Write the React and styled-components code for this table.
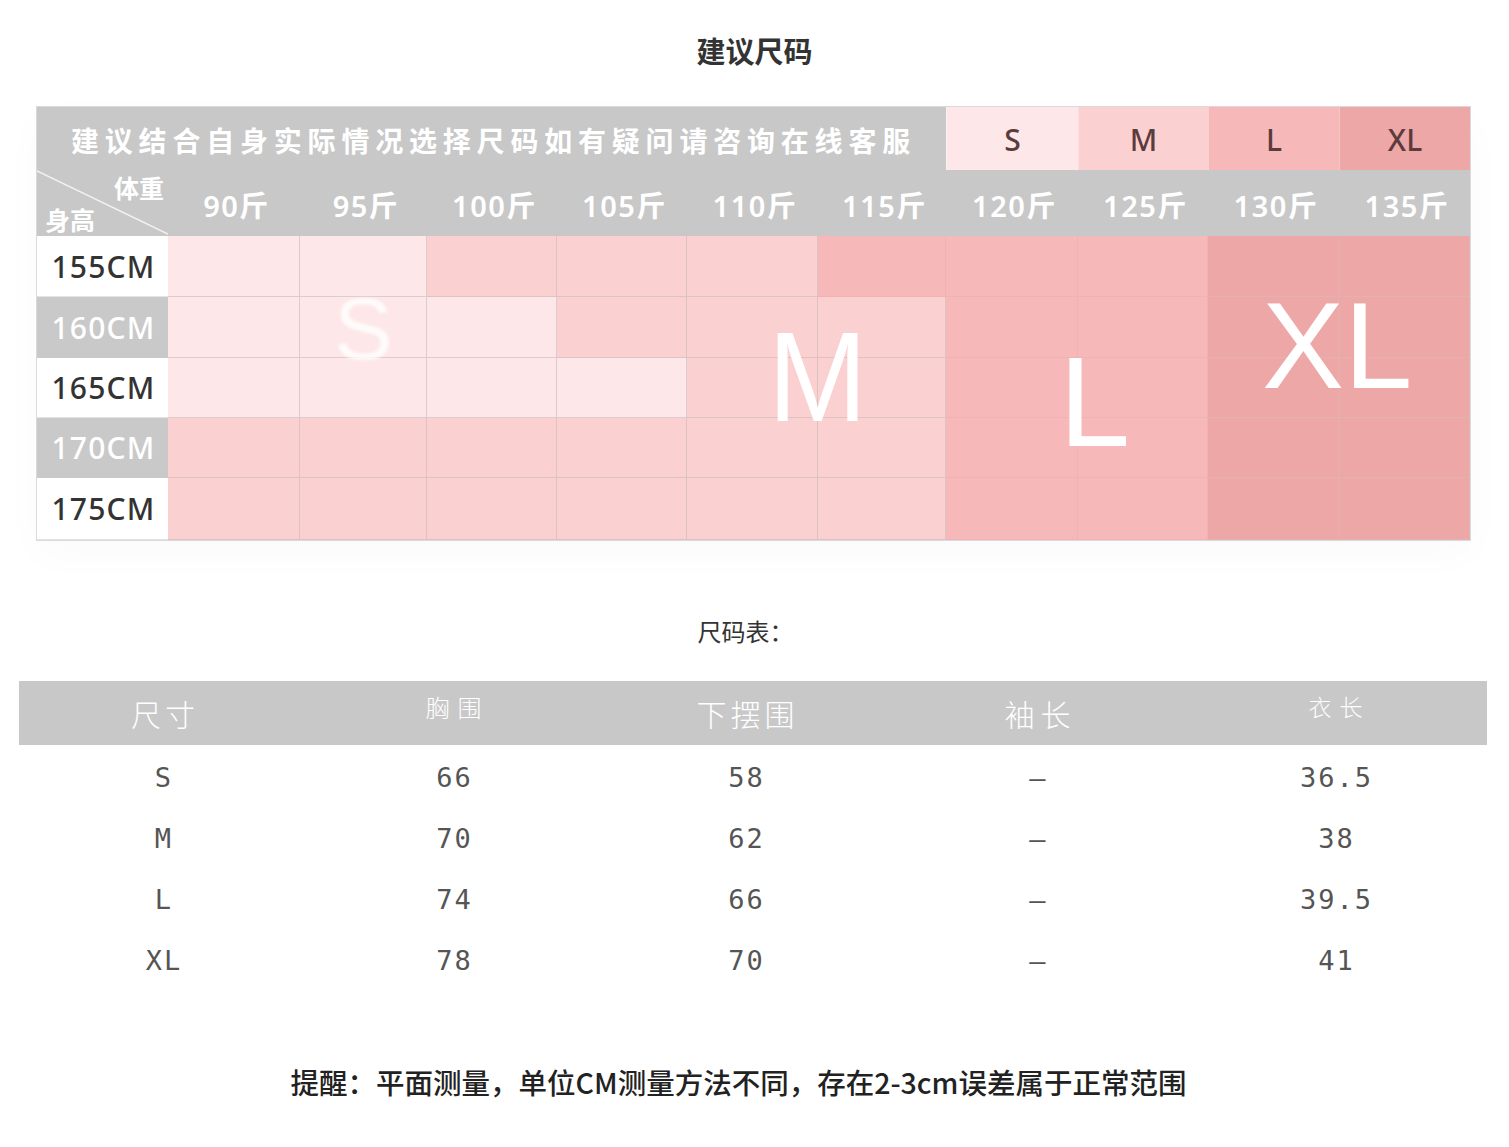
import React from "react";
import styled, { createGlobalStyle } from "styled-components";

const Global = createGlobalStyle`
  html, body { margin: 0; padding: 0; background: #ffffff; }
  body { font-family: "Noto Sans", "Noto Sans CJK SC", sans-serif; }
`;

const Page = styled.div`
  width: 1509px;
  min-height: 1147px;
  background: #fff;
  display: flex;
  flex-direction: column;
`;

const Title = styled.h1`
  margin: 33px 0 0 0;
  height: 74px;
  text-align: center;
  font-family: "Noto Sans CJK SC", sans-serif;
  font-size: 29px;
  line-height: 35px;
  font-weight: 700;
  color: #333;
  letter-spacing: 0px;
`;

const ChartWrap = styled.div`
  position: relative;
  margin-left: 37px;
  width: 1433px;
`;

const ChartGrid = styled.div`
  display: grid;
  grid-template-columns: 131px 132px 127px 130px 130px 131px 128px 132px 130px 131px 131px;
  grid-template-rows: 63px 66px 61px 61px 60px 60px 62px;
  width: 1433px;
  box-shadow: 0 0 0 1px #dadada, 0 14px 40px rgba(0, 0, 0, 0.025);
`;

const Notice = styled.div`
  grid-column: 1 / span 7;
  background: #c8c8c8;
  display: flex;
  align-items: center;
  justify-content: center;
  color: #fff;
  font-family: "Noto Sans CJK SC", sans-serif;
  font-weight: 700;
  font-size: 28px;
  letter-spacing: 5.8px;
  padding-top: 2px;
  padding-left: 4px;
  box-sizing: border-box;
`;

const SizeHead = styled.div`
  background: ${(p) => p.$bg};
  display: flex;
  align-items: center;
  justify-content: center;
  color: #5b3b3b;
  font-family: "Noto Sans", sans-serif;
  font-weight: 500;
  font-size: 30px;
  padding-top: 2px;
  box-sizing: border-box;
  border-left: 1px solid rgba(255, 255, 255, 0.35);
`;

const Corner = styled.div`
  position: relative;
  background: #c8c8c8;
  display: flex;
  flex-direction: column;
  justify-content: space-between;
  padding: 2px 4px 2px 8px;
  box-sizing: border-box;
  color: #fff;
  font-family: "Noto Sans CJK SC", sans-serif;
  font-weight: 700;
  font-size: 25px;
  line-height: 30px;
  overflow: hidden;
`;

const CornerTop = styled.span`
  align-self: flex-end;
`;

const CornerBottom = styled.span`
  align-self: flex-start;
`;

const Diagonal = styled.svg`
  position: absolute;
  left: 0;
  top: 0;
  width: 100%;
  height: 100%;
`;

const Weight = styled.div`
  background: #c8c8c8;
  display: flex;
  align-items: center;
  justify-content: center;
  color: #fff;
  font-family: "Noto Sans", "Noto Sans CJK SC", sans-serif;
  font-weight: 600;
  font-size: 29px;
  letter-spacing: 1.5px;
  padding-top: 2px;
  padding-left: 5px;
  box-sizing: border-box;
`;

const Height = styled.div`
  background: ${(p) => (p.$gray ? "#c9c9c9" : "#ffffff")};
  color: ${(p) => (p.$gray ? "#ffffff" : "#333333")};
  display: flex;
  align-items: center;
  justify-content: center;
  font-family: "Noto Sans", sans-serif;
  font-weight: 500;
  font-size: 30px;
  letter-spacing: 1.2px;
  padding-left: 2px;
  border-bottom: 1px solid ${(p) => (p.$gray ? "#c9c9c9" : "#e4e4e4")};
  box-sizing: border-box;
`;

const Cell = styled.div`
  background: ${(p) => p.$bg};
  border-right: 1px solid ${(p) => p.$line};
  border-bottom: 1px solid ${(p) => p.$line};
  box-sizing: border-box;
`;

const BigLetter = styled.span`
  position: absolute;
  left: ${(p) => p.$x}px;
  top: ${(p) => p.$y}px;
  font-family: "Liberation Sans", Arial, sans-serif;
  font-size: ${(p) => p.$size}px;
  line-height: 1;
  color: #ffffff;
  opacity: ${(p) => p.$alpha || 1};
  filter: ${(p) => (p.$blur ? `blur(${p.$blur}px)` : "none")};
  transform: scaleX(${(p) => p.$sx || 1});
  transform-origin: left top;
  pointer-events: none;
  white-space: nowrap;
`;

const SubTitle = styled.div`
  margin-top: 76px;
  height: 65px;
  text-align: center;
  padding-right: 18px;
  font-family: "Noto Sans CJK SC", sans-serif;
  font-size: 24px;
  line-height: 29px;
  color: #333;
`;

const SizeTable = styled.div`
  margin-left: 19px;
  width: 1468px;
  display: grid;
  grid-template-columns: 288px 293px 291px 293px 303px;
  grid-auto-rows: 61px;
`;

const HeadCell = styled.div`
  height: 64px;
  background: #c8c8c8;
  display: flex;
  align-items: center;
  justify-content: center;
  color: #fff;
  font-family: "Noto Sans CJK SC", sans-serif;
  font-weight: 300;
  font-size: ${(p) => p.$size}px;
  letter-spacing: ${(p) => p.$spacing}px;
  padding-bottom: ${(p) => p.$raise}px;
  padding-left: ${(p) => p.$spacing}px;
  box-sizing: border-box;
`;

const DataCell = styled.div`
  display: flex;
  align-items: center;
  justify-content: center;
  font-family: "DejaVu Sans Mono", "Liberation Mono", monospace;
  font-size: 27px;
  letter-spacing: 2px;
  color: #555;
  padding-top: 9px;
  padding-left: 2px;
  box-sizing: border-box;
`;

const Footer = styled.div`
  margin-top: 78px;
  text-align: center;
  padding-right: 32px;
  font-family: "Noto Sans CJK SC", sans-serif;
  font-weight: 500;
  font-size: 28.5px;
  line-height: 35px;
  color: #222;
`;

const SIZE_STYLE = {
  S: { bg: "#fde7e8", line: "#dccccc" },
  M: { bg: "#fbd0d1", line: "#dcc2c2" },
  L: { bg: "#f6b8b9", line: "#efb3b3" },
  XL: { bg: "#eda7a7", line: "#e3b2ae" },
};

const WEIGHTS = [90, 95, 100, 105, 110, 115, 120, 125, 130, 135];

const ROWS = [
  { h: "155CM", gray: false, s: ["S", "S", "M", "M", "M", "L", "L", "L", "XL", "XL"] },
  { h: "160CM", gray: true, s: ["S", "S", "S", "M", "M", "M", "L", "L", "XL", "XL"] },
  { h: "165CM", gray: false, s: ["S", "S", "S", "S", "M", "M", "L", "L", "XL", "XL"] },
  { h: "170CM", gray: true, s: ["M", "M", "M", "M", "M", "M", "L", "L", "XL", "XL"] },
  { h: "175CM", gray: false, s: ["M", "M", "M", "M", "M", "M", "L", "L", "XL", "XL"] },
];

const HEADS = [
  { t: "尺寸", size: 30, spacing: 4, raise: 0 },
  { t: "胸围", size: 24, spacing: 8, raise: 14 },
  { t: "下摆围", size: 30, spacing: 4, raise: 0 },
  { t: "袖长", size: 30, spacing: 6, raise: 0 },
  { t: "衣长", size: 23, spacing: 8, raise: 14 },
];

const TABLE = [
  ["S", "66", "58", "–", "36.5"],
  ["M", "70", "62", "–", "38"],
  ["L", "74", "66", "–", "39.5"],
  ["XL", "78", "70", "–", "41"],
];

export default function App() {
  return (
    <Page>
      <Global />
      <Title>建议尺码</Title>
      <ChartWrap>
        <ChartGrid>
          <Notice>建议结合自身实际情况选择尺码如有疑问请咨询在线客服</Notice>
          {["S", "M", "L", "XL"].map((s) => (
            <SizeHead key={s} $bg={SIZE_STYLE[s].bg}>
              {s}
            </SizeHead>
          ))}
          <Corner>
            <Diagonal viewBox="0 0 131 66" preserveAspectRatio="none">
              <line x1="0" y1="1" x2="131" y2="64" stroke="#f2f2f2" strokeWidth="1.4" />
            </Diagonal>
            <CornerTop>体重</CornerTop>
            <CornerBottom>身高</CornerBottom>
          </Corner>
          {WEIGHTS.map((w) => (
            <Weight key={w}>{w}斤</Weight>
          ))}
          {ROWS.map((r) => (
            <React.Fragment key={r.h}>
              <Height $gray={r.gray}>{r.h}</Height>
              {r.s.map((s, i) => (
                <Cell key={i} $bg={SIZE_STYLE[s].bg} $line={SIZE_STYLE[s].line} />
              ))}
            </React.Fragment>
          ))}
        </ChartGrid>
        <BigLetter $x={297} $y={178} $size={88} $alpha={0.85} $blur={1.5}>
          S
        </BigLetter>
        <BigLetter $x={731} $y={206} $size={128} $sx={0.93}>
          M
        </BigLetter>
        <BigLetter $x={1022} $y={231} $size={128}>
          L
        </BigLetter>
        <BigLetter $x={1225} $y={177} $size={123}>
          XL
        </BigLetter>
      </ChartWrap>
      <SubTitle>尺码表：</SubTitle>
      <SizeTable>
        {HEADS.map((h) => (
          <HeadCell key={h.t} $size={h.size} $spacing={h.spacing} $raise={h.raise}>
            {h.t}
          </HeadCell>
        ))}
        {TABLE.map((row) =>
          row.map((v, i) => <DataCell key={row[0] + i}>{v}</DataCell>)
        )}
      </SizeTable>
      <Footer>提醒：平面测量，单位CM测量方法不同，存在2-3cm误差属于正常范围</Footer>
    </Page>
  );
}
